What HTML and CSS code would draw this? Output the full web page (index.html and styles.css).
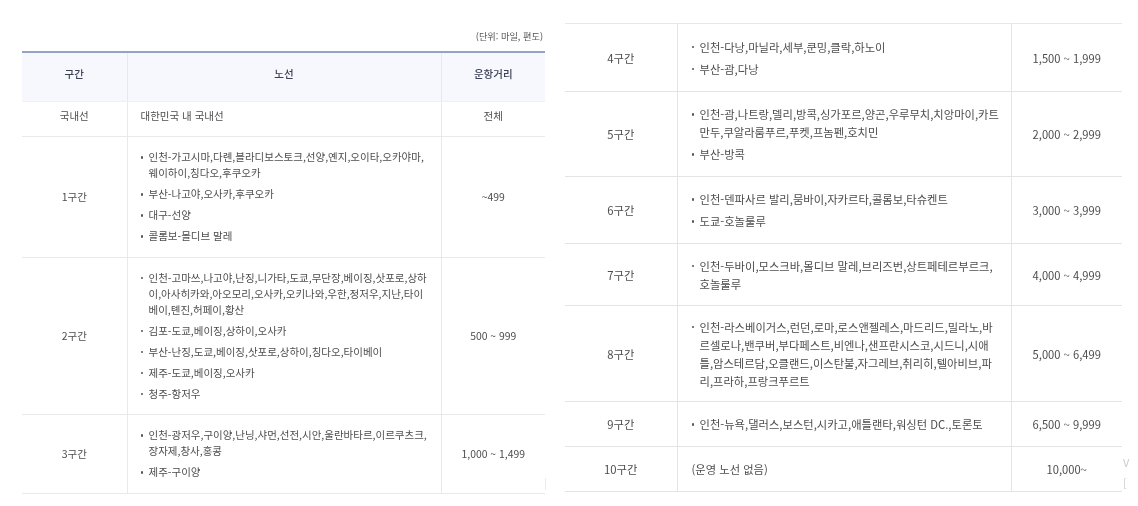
FILE: index.html
```html
<!DOCTYPE html>
<html lang="ko">
<head>
<meta charset="utf-8">
<title>구간표</title>
<link rel="stylesheet" href="styles.css">
</head>
<body>
<main class="page">
  <section class="panel panel-left">
    <p class="unit">(단위: 마일, 편도)</p>
    <table class="fare fare-left">
      <colgroup><col class="c1"><col class="c2"><col class="c3"></colgroup>
      <thead><tr class="r-head"><th>구간</th><th>노선</th><th>운항거리</th></tr></thead>
      <tbody>
        <tr class="r-dom"><td>국내선</td><td class="routes">대한민국 내 국내선</td><td>전체</td></tr>
        <tr class="r1"><td>1구간</td><td class="routes"><ul>
          <li>인천-가고시마,다롄,블라디보스토크,선양,옌지,오이타,오카야마,웨이하이,칭다오,후쿠오카</li>
          <li>부산-나고야,오사카,후쿠오카</li>
          <li>대구-선양</li>
          <li>콜롬보-몰디브 말레</li></ul></td><td class="num">~499</td></tr>
        <tr class="r2"><td>2구간</td><td class="routes"><ul>
          <li>인천-고마쓰,나고야,난징,니가타,도쿄,무단장,베이징,삿포로,상하이,아사히카와,아오모리,오사카,오키나와,우한,정저우,지난,타이베이,톈진,허페이,황산</li>
          <li>김포-도쿄,베이징,상하이,오사카</li>
          <li>부산-난징,도쿄,베이징,삿포로,상하이,칭다오,타이베이</li>
          <li>제주-도쿄,베이징,오사카</li>
          <li>청주-항저우</li></ul></td><td class="num">500 ~ 999</td></tr>
        <tr class="r3"><td>3구간</td><td class="routes"><ul>
          <li>인천-광저우,구이양,난닝,샤먼,선전,시안,울란바타르,이르쿠츠크,장자제,창사,홍콩</li>
          <li>제주-구이양</li></ul></td><td class="num">1,000 ~ 1,499</td></tr>
      </tbody>
    </table>
    <div class="edge-tick"></div>
  </section>
  <section class="panel panel-right">
    <table class="fare fare-right">
      <colgroup><col class="c1"><col class="c2"><col class="c3"></colgroup>
      <tbody>
        <tr class="r4"><td>4구간</td><td class="routes"><ul>
          <li>인천-다낭,마닐라,세부,쿤밍,클락,하노이</li>
          <li>부산-괌,다낭</li></ul></td><td class="num">1,500 ~ 1,999</td></tr>
        <tr class="r5"><td>5구간</td><td class="routes"><ul>
          <li>인천-괌,나트랑,델리,방콕,싱가포르,양곤,우루무치,치앙마이,카트만두,쿠알라룸푸르,푸켓,프놈펜,호치민</li>
          <li>부산-방콕</li></ul></td><td class="num">2,000 ~ 2,999</td></tr>
        <tr class="r6"><td>6구간</td><td class="routes"><ul>
          <li>인천-덴파사르 발리,뭄바이,자카르타,콜롬보,타슈켄트</li>
          <li>도쿄-호놀룰루</li></ul></td><td class="num">3,000 ~ 3,999</td></tr>
        <tr class="r7"><td>7구간</td><td class="routes"><ul>
          <li>인천-두바이,모스크바,몰디브 말레,브리즈번,상트페테르부르크,호놀룰루</li></ul></td><td class="num">4,000 ~ 4,999</td></tr>
        <tr class="r8"><td>8구간</td><td class="routes"><ul>
          <li>인천-라스베이거스,런던,로마,로스앤젤레스,마드리드,밀라노,바르셀로나,밴쿠버,부다페스트,비엔나,샌프란시스코,시드니,시애틀,암스테르담,오클랜드,이스탄불,자그레브,취리히,텔아비브,파리,프라하,프랑크푸르트</li></ul></td><td class="num">5,000 ~ 6,499</td></tr>
        <tr class="r9"><td>9구간</td><td class="routes"><ul>
          <li>인천-뉴욕,댈러스,보스턴,시카고,애틀랜타,워싱턴 DC.,토론토</li></ul></td><td class="num">6,500 ~ 9,999</td></tr>
        <tr class="r10"><td>10구간</td><td class="routes">(운영 노선 없음)</td><td class="num">10,000~</td></tr>
      </tbody>
    </table>
    <div class="edge-mark">V<br>[</div>
  </section>
</main>
</body>
</html>
```

FILE: styles.css
```css
* { box-sizing: border-box; }
html, body { margin: 0; padding: 0; background: #fff; }
body {
  width: 1138px;
  height: 506px;
  overflow: hidden;
  font-family: "Noto Sans CJK KR", "Noto Sans", sans-serif;
  color: #4d4d4d;
}
.page {
  display: flex;
  align-items: flex-start;
  filter: blur(0.35px);
}
.panel { position: relative; flex: none; }
.panel-left { width: 523px; margin-left: 22px; padding-top: 29px; }
.panel-right { width: 557px; margin-left: 20px; padding-top: 23px; }
.unit {
  margin: 0 2px 0 0;
  height: 22px;
  line-height: 14px;
  font-size: 9.2px;
  text-align: right;
  color: #555;
}
.fare {
  width: 100%;
  table-layout: fixed;
  border-collapse: collapse;
  text-align: center;
}
.fare-left { border-top: 2px solid #95a2c6; font-size: 10.5px; }
.fare-right { border-top: 1px solid #e8e8e8; font-size: 11.3px; }
.fare-left .c1 { width: 105px; }
.fare-left .c2 { width: 314px; }
.fare-right .c1 { width: 112px; }
.fare-right .c2 { width: 334px; }
th, td {
  padding: 0;
  border-bottom: 1px solid #e9e9e9;
  border-right: 1px solid #e9e9e9;
  vertical-align: middle;
  font-weight: 400;
}
th:last-child, td:last-child { border-right: 0; }
th {
  background: #f7f8fd;
  color: #3d4154;
  font-weight: 500;
  padding-bottom: 6px;
  border-bottom-color: #f0f0f0;
}
.r-dom td { padding-bottom: 6px; }
.routes { text-align: left; padding: 0 10px 0 13px; }
.fare-left .num { font-size: 10.4px; }
.fare-right .num { font-size: 11.2px; }
.fare-right .routes { padding: 0 10px 0 14px; }
.fare-right td { border-color: #e4e4e4; }
ul { list-style: none; margin: 0; padding: 0; }
li { position: relative; padding-left: 8px; }
li::before {
  content: "";
  position: absolute;
  left: 0;
  width: 2.5px;
  height: 2.5px;
  background: #555;
  border-radius: 50%;
}
.fare-left li { line-height: 16px; margin-top: 5px; }
.fare-left li::before { top: 7px; }
.fare-right li { line-height: 18px; margin-top: 4px; }
.fare-right li::before { top: 8px; }
li:first-child { margin-top: 0; }
.r-head { height: 49px; }
.r-dom { height: 35px; }
.r1 { height: 121px; }
.r2 { height: 157px; }
.r3 { height: 79px; }
.r4 { height: 68px; }
.r5 { height: 85px; }
.r6 { height: 67px; }
.r7 { height: 62px; }
.r8 { height: 96px; }
.r9 { height: 45px; }
.r10 { height: 45px; }
.edge-tick {
  position: absolute;
  left: 523px;
  top: 478px;
  width: 1px;
  height: 12px;
  background: #ececec;
}
.edge-mark {
  position: absolute;
  left: 558px;
  top: 452px;
  font-size: 11px;
  line-height: 21px;
  color: #ccc;
}
```
